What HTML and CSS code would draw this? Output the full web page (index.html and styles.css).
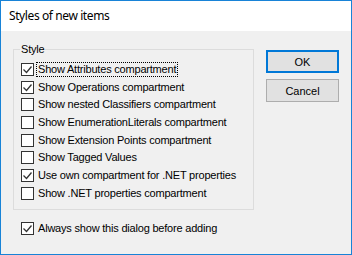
FILE: index.html
```html
<!DOCTYPE html>
<html lang="en">
<head>
    <meta charset="UTF-8">
    <title>Styles of new items</title>
    <link rel="stylesheet" href="styles.css">
</head>
<body>

    <div class="window">
        <div class="titlebar">Styles of new items</div>
        <div class="content">
            <div class="left">
                <fieldset class="group">
                    <legend>Style</legend>
                    <div class="row"><span class="box checked"></span><span class="label focus">Show Attributes compartment</span></div>
                    <div class="row"><span class="box checked"></span><span class="label">Show Operations compartment</span></div>
                    <div class="row"><span class="box"></span><span class="label">Show nested Classifiers compartment</span></div>
                    <div class="row"><span class="box"></span><span class="label">Show EnumerationLiterals compartment</span></div>
                    <div class="row"><span class="box"></span><span class="label">Show Extension Points compartment</span></div>
                    <div class="row"><span class="box"></span><span class="label">Show Tagged Values</span></div>
                    <div class="row"><span class="box checked"></span><span class="label">Use own compartment for .NET properties</span></div>
                    <div class="row"><span class="box"></span><span class="label">Show .NET properties compartment</span></div>
                </fieldset>
                <div class="row always"><span class="box checked"></span><span class="label">Always show this dialog before adding</span></div>
            </div>
            <div class="buttons">
                <button class="btn default">OK</button>
                <button class="btn">Cancel</button>
            </div>
        </div>
    </div>

</body>
</html>
```

FILE: styles.css
```css
body { margin: 0; font-family: "Liberation Sans", Arial, sans-serif; font-size: 11px; letter-spacing: -0.2px; color: #000; }
.window { width: 350px; height: 253px; border: 1px solid #1883d7; background-color: #f0f0f0; }
.titlebar { height: 30px; background-color: #fff; font-family: "Noto Sans", sans-serif; font-size: 12px; letter-spacing: -0.4px; line-height: 30px; padding-left: 8px; }
.content { display: flex; padding: 12px 0 0 12px; }
.left { width: 241px; }
.group { margin: 0; padding: 4.6px 0 6.8px 7px; border: 1px solid #dcdcdc; }
.group legend { padding: 0 1px; margin-left: -1px; line-height: 13px; }
.row { display: flex; align-items: center; height: 17.7px; white-space: nowrap; }
.box { width: 11px; height: 11px; border: 1px solid #333; background-color: #fff; flex: none; position: relative; }
.box.checked::after { content: ""; position: absolute; left: 1px; top: 1px; width: 9px; height: 9px;
  background: url("data:image/svg+xml;utf8,<svg xmlns='http://www.w3.org/2000/svg' width='9' height='9'><path d='M0.5 4.5 L3.5 7.5 L8.5 1.5' fill='none' stroke='%23333' stroke-width='1.3'/></svg>") no-repeat; }
.label { margin-left: 3px; padding: 0 1px; line-height: 13px; }
.label.focus { outline: 1px dotted #000; outline-offset: 0; }
.always { margin-top: 10.2px; padding-left: 8px; }
.buttons { display: flex; flex-direction: column; gap: 6px; margin-left: 12px; padding-top: 7px; }
.btn { width: 73px; height: 23px; background-color: #e1e1e1; border: 1px solid #adadad; font-family: "Liberation Sans", Arial, sans-serif; font-size: 11px; color: #000; padding: 0; }
.btn.default { border: 2px solid #0078d7; }
```
